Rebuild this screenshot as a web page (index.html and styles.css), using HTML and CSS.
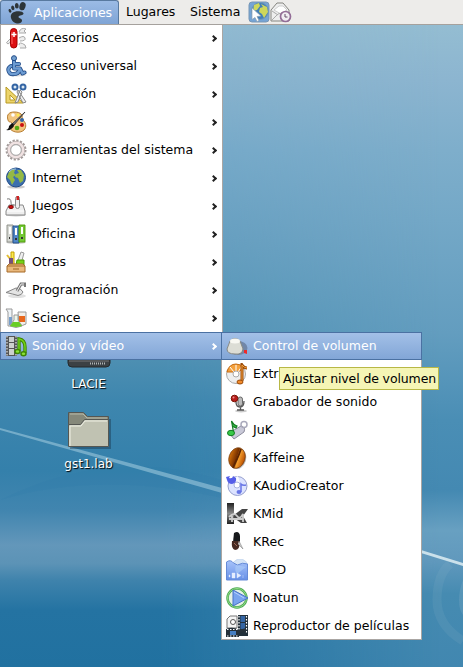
FILE: index.html
```html
<!DOCTYPE html>
<html lang="es">
<head>
<meta charset="utf-8">
<title>Escritorio</title>
<link rel="stylesheet" href="styles.css">
</head>
<body>
<div class="desktop">
<svg class="wallpaper" viewBox="0 0 463 667" preserveAspectRatio="none">
<defs>
<linearGradient id="base" x1="0" y1="0" x2="0" y2="1">
<stop offset=".037" stop-color="#94bdd2"/><stop offset=".12" stop-color="#8cb5d0"/><stop offset=".225" stop-color="#7eaecb"/><stop offset=".33" stop-color="#74a8c7"/><stop offset=".5" stop-color="#639dbf"/><stop offset=".63" stop-color="#4a8eb5"/><stop offset=".735" stop-color="#4489b2"/><stop offset=".795" stop-color="#68a0c1"/><stop offset=".84" stop-color="#6199bd"/><stop offset=".89" stop-color="#468bb1"/><stop offset="1" stop-color="#4187b0"/>
</linearGradient>
<linearGradient id="left" x1="0" y1="0" x2="0" y2="1">
<stop offset=".037" stop-color="#8fb8d0"/><stop offset=".135" stop-color="#84b0cb"/><stop offset=".225" stop-color="#74a8c8"/><stop offset=".36" stop-color="#649dbe"/><stop offset=".48" stop-color="#5394b6"/><stop offset=".54" stop-color="#4d8fb2"/><stop offset=".6" stop-color="#3e86ae"/><stop offset=".705" stop-color="#3480ab"/><stop offset=".765" stop-color="#4185af"/><stop offset=".817" stop-color="#6397ba"/><stop offset=".845" stop-color="#5c93b6"/><stop offset=".87" stop-color="#3f83ac"/><stop offset=".915" stop-color="#2473a2"/><stop offset="1" stop-color="#2171a0"/>
</linearGradient>
<linearGradient id="fade"><stop offset=".35" stop-color="#fff"/><stop offset=".95" stop-color="#000"/></linearGradient>
<mask id="blend"><path fill="url(#fade)" d="M0 0H463V667H0z"/></mask>
</defs>
<path fill="url(#base)" d="M0 0H463V667H0z"/>
<path fill="url(#left)" mask="url(#blend)" d="M0 0H463V667H0z"/>
<path d="M0 500Q110 445 222 480V498Q100 470 0 500z" fill="#287aa9" opacity=".14"/>
<path d="M0 428L222 488V493L0 430z" fill="#9dc8dc" opacity=".6"/>
<path d="M421 550L463 563V566L421 553z" fill="#cbe1eb"/>
<path d="M450 564Q437 575 437 600T463 641" fill="none" stroke="#8bb5cc" stroke-width="9" opacity=".15"/>
<path d="M463 580Q459 590 459 600T463 615" fill="#8bb5cc" opacity=".25"/>
</svg>

<header class="panel">
<div class="tab active"><svg class="foot" viewBox="0 0 22 24"><g fill="#2d3539"><ellipse cx="15.500" cy="5.200" rx="3" ry="4.200" transform="rotate(18 15.500 5.200)"/><ellipse cx="9.800" cy="4.800" rx="1.900" ry="2.800" transform="rotate(-4 9.800 4.800)"/><ellipse cx="5.800" cy="6.900" rx="1.600" ry="2.300" transform="rotate(-18 5.800 6.900)"/><ellipse cx="3" cy="9.800" rx="1.300" ry="1.900" transform="rotate(-28 3 9.800)"/><path d="M12 10.200C6.500 10 2.800 12.500 4 17c1.700 6.500 10.500 7 11 2.800.3-3-3.800-2-3.500-4 .4-1.800 5.500-1 5-3.500-.3-1.500-2.500-2-4.500-2.100z"/></g></svg><span>Aplicaciones</span></div>
<div class="tab">Lugares</div><div class="tab sys">Sistema</div>
<svg class="launch" viewBox="0 0 22 22"><rect x="1" y="1" width="20" height="20" rx="3" fill="#75a4d5" stroke="#7897b6"/><circle cx="12" cy="10" r="8.500" fill="#437fb8" stroke="#7198bb"/><path d="M6 4l5-2 1 3-3 4-4 1zM13 3l6 3 1 5-4 6-2-4-3-2 1-4 3-1z" fill="#ced75b"/><path d="M4 7l9 8-4 .5 2 4-2 1-2-4-3 2z" fill="#fff" stroke="#8ca0b1" stroke-width=".7"/></svg>
<svg class="launch" viewBox="0 0 22 22"><path d="M1 9L7 2h6l6 7v11H1z" fill="#eee" stroke="#858580"/><path d="M4 9l5-4h4l4 4-6 4z" fill="#fff" stroke="#bbb" stroke-width=".7"/><path d="M2 19l6-6 4-1M2 10l6 4" fill="none" stroke="#aaa"/><circle cx="15.500" cy="15.500" r="5" fill="#f1edf2" stroke="#936d97" stroke-width="1.700"/><path d="M15 13v3h2.500" fill="none" stroke="#654d68"/></svg>
</header>

<nav class="menu main">
<div class="item"><svg class="icon" viewBox="0 0 22 22"><path d="M9 12L3 17q-3-1 0-3l6-6M14 5q2-5 7-3l-2 2 2 2h-7M14 11q5-3 6 0t-5 3M14 18q0-4 6 0l1 3h-6" fill="#eee" stroke="#aaa"/><rect x="5.500" y="1.500" width="6.500" height="19.500" rx="3.200" fill="#dd1013" stroke="#a40000"/><path d="M7 5v12" stroke="#f66"/><path d="M9 5v5M6.500 7.500h5" stroke="#fff" stroke-width="1.500"/></svg><span>Accesorios</span><i></i></div>
<div class="item"><svg class="icon" viewBox="0 0 22 22"><ellipse cx="12" cy="20" rx="9" ry="1.500" fill="#ddd"/><g fill="none" stroke-linecap="round" stroke-linejoin="round"><path d="M9 5v8.500h6l2.500 5 2-1M10 9h4M6 11C1 14 4 20 9 19q4 0 5-3" stroke="#204a87" stroke-width="4"/><path d="M9 5v8.500h6l2.500 5 2-1M10 9h4M6 11C1 14 4 20 9 19q4 0 5-3" stroke="#6d9cd2" stroke-width="2.400"/></g><circle cx="9" cy="3.200" r="2.500" fill="#729fcf" stroke="#204a87"/></svg><span>Acceso universal</span><i></i></div>
<div class="item"><svg class="icon" viewBox="0 0 22 22"><path d="M1 4L18 20H1zM5 12v5h5z" fill="#edd46a" stroke="#b79922" fill-rule="evenodd"/><path d="M15 7L10 20l3-1 4-10zM13 7l8 12-3 1-6-11z" fill="#eee" stroke="#888"/><circle cx="10" cy="4" r="2.500" fill="#dbe8f3" stroke="#3465a4" stroke-width="2"/><circle cx="18" cy="4" r="2.500" fill="#dbe8f3" stroke="#3465a4" stroke-width="2"/></svg><span>Educación</span><i></i></div>
<div class="item"><svg class="icon" viewBox="0 0 22 22"><path d="M3 9C1 3 5 1 9 1c7 0 9 3 8 7 4 3 5 8 2 11-4 4-13 2-14-2-1-3 4-3 2-5s-3 0-4-3z" fill="#f1c580" stroke="#b67d30"/><circle cx="8" cy="4" r="1.800" fill="#fff"/><circle cx="13" cy="4" r="1.500" fill="#fce94f"/><circle cx="17" cy="9" r="2" fill="#3465a4"/><circle cx="17" cy="14" r="2" fill="#cc1010"/><circle cx="12" cy="17" r="2.300" fill="#54a914"/><path d="M20 1L9 14l-2-1z" fill="#777" stroke="#333" stroke-width=".8"/><path d="M7 12q2 1 2 3-3 5-8 4 3-1 3-4z" fill="#111"/></svg><span>Gráficos</span><i></i></div>
<div class="item"><svg class="icon" viewBox="0 0 22 22"><circle cx="11" cy="11" r="9.500" fill="none" stroke="#a39a99" stroke-width="2" stroke-dasharray="2.230 1.500"/><circle cx="11" cy="11" r="7.300" fill="#fff" stroke="#a39a99" stroke-width="3.400"/><circle cx="11" cy="11" r="7.200" fill="none" stroke="#f0e2e2" stroke-width="2.600"/><circle cx="11" cy="11" r="5.300" fill="#fff" stroke="#999" stroke-width=".8"/></svg><span>Herramientas del sistema</span><i></i></div>
<div class="item"><svg class="icon" viewBox="0 0 22 22"><ellipse cx="11" cy="20" rx="9" ry="1.600" fill="#ccc"/><circle cx="11" cy="10.500" r="9.500" fill="#3c70ae" stroke="#204a87"/><path d="M4 5l4-3 2 1-1 3 2 2-3 2 2 3-3 5-2-5-3-3zM12 3l4 0 3 5-1 6-3 2-2-5-3-1 1-3 3-1z" fill="#94b944"/><path d="M4 5q3-4 7-3" fill="none" stroke="#a6c9e9"/></svg><span>Internet</span><i></i></div>
<div class="item"><svg class="icon" viewBox="0 0 22 22"><ellipse cx="11" cy="20" rx="10" ry="1.500" fill="#ccc"/><path d="M4 10h14l2 6v4H1v-4z" fill="#eee" stroke="#888"/><path d="M2 16h17" stroke="#fff"/><path d="M2 4q4-1 4 3t3 3" fill="none" stroke="#777"/><rect x="10.500" y="1.500" width="4" height="12" rx="2" fill="#eee" stroke="#888"/><rect x="11.500" y="1" width="2.500" height="4" fill="#c22"/><ellipse cx="6" cy="12" rx="2.300" ry="1.500" fill="#c11" stroke="#800"/></svg><span>Juegos</span><i></i></div>
<div class="item"><svg class="icon" viewBox="0 0 22 22"><ellipse cx="11" cy="19.500" rx="10" ry="1.500" fill="#ccc"/><g stroke-width=".9"><path d="M2 2h6v17H2z" fill="#d5d7d2" stroke="#888a85"/><path d="M8 3h6v17H8z" fill="#4f86c6" stroke="#204a87"/><path d="M14 2h6v17h-6z" fill="#73c936" stroke="#4e9a06"/></g><path d="M4 4h2v7H4zM10 5h2v7h-2zM16 4h2v7h-2z" fill="#fff"/><path d="M4 15h1M10 16h2M16 15h2" stroke="#333" stroke-width="2"/></svg><span>Oficina</span><i></i></div>
<div class="item"><svg class="icon" viewBox="0 0 22 22"><path d="M6 1h3v12H6z" fill="#fce94f" stroke="#c4a000"/><path d="M2 4l8 10" stroke="#e5bd32" stroke-width="2"/><path d="M4 7h4v7H4z" fill="#75507b"/><path d="M16 1l3 1-3 11-4-1z" fill="#eee" stroke="#999"/><path d="M12 9h7v5h-8z" fill="#73d216" stroke="#4e9a06"/><path d="M4 13h14l2 2v6H2v-6z" fill="#e9b87c" stroke="#a66b29"/><path d="M2 15h18" stroke="#a66b29"/><path d="M8 18h6" stroke="#9a6225"/></svg><span>Otras</span><i></i></div>
<div class="item"><svg class="icon" viewBox="0 0 22 22"><ellipse cx="12" cy="17" rx="9" ry="2" fill="#e1e1e1"/><path d="M1 13.500L11 9q5 0 7 4-1 3-5 3.500Q8 15 1 13.500z" fill="#e4e4e4" stroke="#858585"/><path d="M12 12L16 5h5" fill="none" stroke="#777" stroke-width="3"/><path d="M12 12L16 5h4" fill="none" stroke="#eee"/><path d="M20 4v4" stroke="#777" stroke-width="2"/></svg><span>Programación</span><i></i></div>
<div class="item"><svg class="icon" viewBox="0 0 22 22"><path d="M1 2h6v17H3V5z" fill="#eef3f6" stroke="#999"/><path d="M4 10h3v8H4z" fill="#769ecb"/><path d="M13 5h8v12q-4 3-7 0z" fill="#f2eee9" stroke="#999"/><path d="M14 9h6v6h-6z" fill="#e8671c"/><path d="M9 8h4v5l4 6q-6 3-12 0l4-6z" fill="#edf7e9" stroke="#999"/><path d="M8 15h6l3 4q-6 2-12 0z" fill="#68ce25"/></svg><span>Science</span><i></i></div>
<div class="item selected"><svg class="icon" viewBox="0 0 22 22"><path d="M1 1h11v20H1z" fill="#555"/><path d="M4 2h5v5H4zM4 8h5v5H4zM4 14h5v6H4z" fill="#ccd0cd"/><path d="M2 1v20M11 1v20" stroke="#fff" stroke-dasharray="1.500 1.500"/><path d="M14 16V4q6 1 6 8v6" fill="none" stroke="#3f8504" stroke-width="3.400"/><path d="M14 16V4q6 1 6 8v6" fill="none" stroke="#73d216" stroke-width="1.400"/><ellipse cx="12.500" cy="16.500" rx="2.500" ry="2" fill="#8ae234" stroke="#3f8504" stroke-width="1.500"/><ellipse cx="18.500" cy="18.800" rx="2.500" ry="2" fill="#8ae234" stroke="#3f8504" stroke-width="1.500"/></svg><span>Sonido y vídeo</span><i></i></div>
</nav>

<section class="desk-icons">
<svg class="drive" viewBox="0 0 44 10"><path d="M1 0h42v3q0 4-4 4H5q-4 0-4-4z" fill="#3c4144" stroke="#25292b"/><path d="M2 1h40" stroke="#777"/><path d="M23 3.500h15" stroke="#b0b4b5" stroke-width="2" stroke-dasharray="1 1"/></svg>
<div>LACIE</div>
<svg class="folder" viewBox="0 0 44 38"><path d="M3 37h40V8" fill="none" stroke="#123" stroke-width="2" opacity=".35"/><path d="M1.500 1.500h15l4 4h21v14h-40z" fill="#85887a" stroke="#555753"/><path d="M3 3h13l4 4h20" fill="none" stroke="#b8baa9"/><path d="M1.500 13.500h12l4-5h24v27h-40z" fill="#c0c2b2" stroke="#555753"/><path d="M3 35V15h11l4-5h22" fill="none" stroke="#eff0e4"/></svg>
<div>gst1.lab</div>
</section>

<nav class="menu sub">
<div class="item selected"><svg class="icon" viewBox="0 0 22 22"><ellipse cx="12" cy="13" rx="9.500" ry="7" fill="#7187a8"/><path d="M4 6q5-5 10 0l3 8q-1 6-8 5-8 0-8-5z" fill="#dcddd5" stroke="#888a85"/><ellipse cx="9" cy="6" rx="5" ry="2.500" fill="#f8f8f2"/><path d="M18 15l3 0v4l-3-1z" fill="#ef2929"/></svg><span>Control de volumen</span></div>
<div class="item"><svg class="icon" viewBox="0 0 22 22"><circle cx="10" cy="11" r="9.500" fill="#eee" stroke="#aaa"/><path d="M1 9q2-8 9-8 5 0 8 4l-6 4H8z" fill="#f4a13d" stroke="#c86c12"/><path d="M8 9L4 4M10 8V2M12 9l4-6" stroke="#fff"/><circle cx="10" cy="11" r="3" fill="#fff" stroke="#aaa"/><path d="M16 18V2q2 3 5 3" fill="none" stroke="#9b4b08" stroke-width="3"/><path d="M16 18V2q2 3 5 3" fill="none" stroke="#f4a13d"/><ellipse cx="14" cy="19" rx="3" ry="2" fill="#f28b2c" stroke="#9b4b08"/></svg><span>Extractor</span></div>
<div class="item"><svg class="icon" viewBox="0 0 22 22"><ellipse cx="15" cy="20" rx="6" ry="1.500" fill="#ccc"/><rect x="12" y="6" width="4.500" height="9" rx="2.200" fill="#bbb" stroke="#666"/><path d="M10 11q0 5 4 5t4-6M14.500 16v3M11 19h7" fill="none" stroke="#555" stroke-width="1.300"/><circle cx="8.500" cy="7.500" r="3.300" fill="#b81c1c" stroke="#710"/><circle cx="7.500" cy="6.500" r="1" fill="#ee8d88"/></svg><span>Grabador de sonido</span></div>
<div class="item"><svg class="icon" viewBox="0 0 22 22"><path d="M3 14L15 7q5 1 3 6L8 20z" fill="#c9c9d8" stroke="#8c8c9d"/><circle cx="18" cy="5.500" r="3" fill="none" stroke="#aaaabc" stroke-width="1.500"/><path d="M7.500 13L5.500 2q2 4 5.500 5l-1 2-4-2" fill="#38b947" stroke="#137c22" stroke-width="1.200"/><ellipse cx="5" cy="14" rx="3.500" ry="2.700" fill="#38c947" stroke="#137c22"/></svg><span>JuK</span></div>
<div class="item"><svg class="icon" viewBox="0 0 22 22"><defs><linearGradient id="bean"><stop stop-color="#d17009"/><stop offset=".45" stop-color="#773000"/><stop offset=".6" stop-color="#f4a02e"/><stop offset="1" stop-color="#b94c00"/></linearGradient></defs><ellipse cx="12" cy="12" rx="8" ry="10.500" transform="rotate(18 12 12)" fill="#bbb"/><ellipse cx="11" cy="11" rx="8" ry="10.500" transform="rotate(18 11 11)" fill="url(#bean)" stroke="#783b0a" stroke-width=".7"/><path d="M15 2Q13 8 11 12T7 21" fill="none" stroke="#5d2500" stroke-width="1.800"/></svg><span>Kaffeine</span></div>
<div class="item"><svg class="icon" viewBox="0 0 22 22"><circle cx="11.500" cy="11" r="9.500" fill="#dce3ff" stroke="#969fce"/><path d="M12 1l2 7-4 2-7-5z" fill="#fff" opacity=".8"/><circle cx="11" cy="10" r="3" fill="#fff" stroke="#aab4df"/><path d="M0 2l4-1-1 2q4 1 4-2l3 2q1 5-4 6-4 0-5-4z" fill="#555ee8"/><path d="M15 17V9q2 2 5 1" fill="none" stroke="#6876e6" stroke-width="1.500"/><ellipse cx="13" cy="17" rx="2.500" ry="2" fill="#6876e6"/></svg><span>KAudioCreator</span></div>
<div class="item"><svg class="icon" viewBox="0 0 22 22"><defs><linearGradient id="metal" x2="0" y2="1"><stop stop-color="#222"/><stop offset=".5" stop-color="#888"/><stop offset="1" stop-color="#222"/></linearGradient></defs><path d="M1 0h7v21H1z" fill="url(#metal)"/><path d="M8 12L16 6h6l-5 7 4 7h-6l-7-5z" fill="#444"/><path d="M3 14q5-5 8-1t6-2v8M6 11v8M3 16h14" fill="none" stroke="#ccc" stroke-width="1.800"/></svg><span>KMid</span></div>
<div class="item"><svg class="icon" viewBox="0 0 22 22"><path d="M8 2q5-3 6 3v6H7z" fill="#17191b"/><path d="M6 10h8q0 9-5 9-4-1-3-9z" fill="#462a22"/><path d="M8 12l3 3" stroke="#9c6954"/><path d="M13 10l4 8-5-5" fill="#ccc" stroke="#888" stroke-width=".6"/></svg><span>KRec</span></div>
<div class="item"><svg class="icon" viewBox="0 0 22 22"><defs><linearGradient id="cd" x2="0" y2="1"><stop stop-color="#a7c3fa"/><stop offset="1" stop-color="#6790e7"/></linearGradient></defs><circle cx="14" cy="8" r="8" fill="#d5e4f6" stroke="#b9cee9" stroke-width=".6"/><path d="M.5 3q4-3 7 1l4 2q5-3 10-1v16H.5z" fill="url(#cd)" stroke="#668bd7"/><path d="M10 6q-2 5 1 9l9-7" fill="#b4d3fa" opacity=".5"/><path d="M6 14h3v5H6zM11 14l4 2.500-4 2.500zM17 16v3M3 16h1v2H3z" fill="#e4edff" stroke="#e4edff" stroke-width=".4"/></svg><span>KsCD</span></div>
<div class="item"><svg class="icon" viewBox="0 0 22 22"><circle cx="11" cy="11" r="9.500" fill="#e5f1e5" stroke="#4ca956" stroke-width="2.500"/><circle cx="11" cy="11" r="9.500" fill="none" stroke="#93dd83"/><path d="M7 3l15 8L7 19z" fill="#79a4ee" stroke="#4671c8"/><path d="M8 5l10 6" stroke="#b6d0ff"/></svg><span>Noatun</span></div>
<div class="item"><svg class="icon" viewBox="0 0 22 22"><path d="M12 0h10v21H12z" fill="#22303b"/><path d="M14.500 1h4.500v6h-4.500zM14.500 8h4.500v6h-4.500z" fill="#3465a4"/><path d="M13 1v18M20.500 1v18" stroke="#fff" stroke-width="1.200" stroke-dasharray="1.500 1.500"/><path d="M4 1h7v12H1V4z" fill="#f4f4f4" stroke="#777"/><circle cx="7" cy="7" r="2.500" fill="#fff" stroke="#555"/><path d="M0 14q7-3 13 1l7-2v4q-3-1-7 2v3H0z" fill="#26313a"/><path d="M4 16h6v4H4z" fill="#477fc2"/><path d="M1 14.500h12M1 21h12" stroke="#fff" stroke-dasharray="1.500 1.500"/></svg><span>Reproductor de películas</span></div>
</nav>
<div class="tooltip">Ajustar nivel de volumen</div>
</div>
</body>
</html>
```
FILE: styles.css
```css
* { box-sizing: border-box; }
body { margin: 0; font: 12.5px/16px "DejaVu Sans", sans-serif; color: #000; }
.desktop { position: relative; width: 463px; height: 667px; overflow: hidden; }
.wallpaper { position: absolute; inset: 0; width: 463px; height: 667px; }
.panel { position: relative; z-index: 1; height: 25px; display: flex; align-items: center; background: #edecea; border-bottom: 1px solid #a5a19d; white-space: nowrap; }
.tab { height: 24px; display: flex; align-items: center; padding: 0 0 0 7px; width: 71px; }
.tab.sys { width: 58px; padding-left: 0; }
.tab.active { width: 119px; padding: 0 0 0 6px; gap: 5px; color: #fff; border: 1px solid #58799f; border-bottom: 0; border-radius: 3px 3px 0 0; background: linear-gradient(#9bbbe5, #7fa4d5); }
.foot { width: 22px; height: 24px; }
.launch { width: 22px; height: 22px; }
.menu { position: absolute; display: flex; flex-direction: column; background: #fff; border: 1px solid #aaa6a3; }
.main { top: 24px; left: 0; width: 223px; border-width: 0 1px 0 1px; }
.sub { left: 221px; top: 332px; width: 201px; height: 308px; border-top: 0; }
.item { display: flex; flex: none; align-items: center; height: 28px; padding: 0 4px; gap: 5px; white-space: nowrap; }
.icon { width: 22px; height: 22px; flex: none; }
.item span { flex: 1; }
.sub .item span { letter-spacing: 0.04px; }
.item i { width: 5px; height: 5px; margin-right: 2px; border: solid #222; border-width: 1.5px 1.5px 0 0; border-width: 2px 2px 0 0; transform: rotate(45deg); }
.item.selected { margin: 0 -1px; color: #fff; background: linear-gradient(#a3c0e7, #82a6d7); border: 1px solid #4b71a2; }
.item.selected i { border-color: #fff; }
.sub .item:last-child { margin-bottom: -1px; }
.desk-icons { position: absolute; left: 28px; top: 360px; width: 121px; display: flex; flex-direction: column; align-items: center; color: #fff; font-size: 12px; text-shadow: 1px 1px 1px #000; }
.drive { width: 44px; height: 10px; margin-bottom: 6px; }
.folder { width: 44px; height: 38px; margin: 19px 0 7px; }
.tooltip { position: absolute; left: 279px; top: 367px; width: 160px; height: 23px; padding: 3px; background: #f5f5b5; border: 1px solid #b8b846; letter-spacing: -0.12px; white-space: nowrap; }
```
